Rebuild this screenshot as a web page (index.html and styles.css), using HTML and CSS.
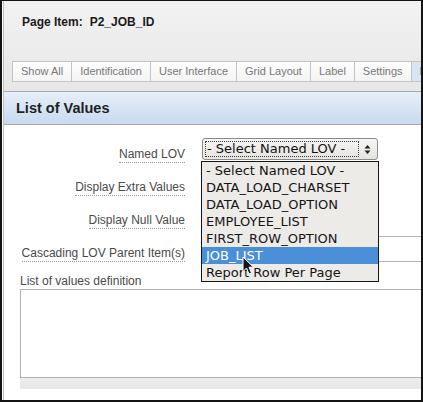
FILE: index.html
```html
<!DOCTYPE html>
<html lang="en">
<head>
<meta charset="utf-8">
<title>Page Item: P2_JOB_ID</title>
<link rel="stylesheet" href="styles.css">
</head>
<body>
<div class="frame">
  <div class="panel">
    <header class="top">
      <h1 class="item-title"><span class="item-key">Page Item:</span><span class="item-name">P2_JOB_ID</span></h1>
      <ul class="tabs">
        <li class="tab">Show All</li>
        <li class="tab">Identification</li>
        <li class="tab">User Interface</li>
        <li class="tab">Grid Layout</li>
        <li class="tab">Label</li>
        <li class="tab">Settings</li>
        <li class="tab tab-active">List of Values</li>
      </ul>
    </header>
    <h2 class="section-head">List of Values</h2>
    <div class="form">
      <div class="row">
        <div class="label-cell"><label class="field-label">Named LOV</label></div>
        <div class="field-cell">
          <div class="select">
            <span class="select-value">- Select Named LOV -</span>
            <span class="select-arrows">
              <svg width="7" height="11" viewBox="0 0 7 11"><polygon points="0.5,4.5 3.5,1 6.5,4.5" fill="#222"/><polygon points="0.5,6.5 3.5,10 6.5,6.5" fill="#222"/></svg>
            </span>
          </div>
          <ul class="dropdown">
            <li class="opt">- Select Named LOV -</li>
            <li class="opt">DATA_LOAD_CHARSET</li>
            <li class="opt">DATA_LOAD_OPTION</li>
            <li class="opt">EMPLOYEE_LIST</li>
            <li class="opt">FIRST_ROW_OPTION</li>
            <li class="opt opt-active">JOB_LIST</li>
            <li class="opt">Report Row Per Page</li>
          </ul>
        </div>
      </div>
      <div class="row">
        <div class="label-cell"><label class="field-label">Display Extra Values</label></div>
        <div class="field-cell"></div>
      </div>
      <div class="row">
        <div class="label-cell"><label class="field-label">Display Null Value</label></div>
        <div class="field-cell"></div>
      </div>
      <div class="row">
        <div class="label-cell"><label class="field-label">Cascading LOV Parent Item(s)</label></div>
        <div class="field-cell"><input class="text-input" type="text"></div>
      </div>
      <div class="def-label">List of values definition</div>
      <textarea class="def-area"></textarea>
      <div class="def-bar"></div>
    </div>
  </div>
  <svg class="cursor" width="13" height="20" viewBox="0 0 13 20"><path d="M1 1 L1 15.5 L4.5 12 L7 18 L9.5 17 L7 11.2 L11.5 11.2 Z" fill="#15151a" stroke="#fff" stroke-width="1" stroke-linejoin="round"/></svg>
</div>
</body>
</html>
```
FILE: styles.css
```css
body {
  margin: 0;
  font-family: "Liberation Sans", Arial, sans-serif;
  background: #fff;
}

.frame {
  position: relative;
  width: 423px;
  height: 402px;
  box-sizing: border-box;
  border-style: solid;
  border-color: #141414;
  border-width: 1px 2px 2px 2px;
  overflow: hidden;
  background: #fff;
}

.panel {
  margin-left: 1px;
  border-left: 1px solid #c2c2c2;
  height: 100%;
  overflow: hidden;
}

.top {
  background: linear-gradient(#f2f2f2, #e7e7e7);
  padding: 14px 0 9px;
  border-bottom: 1px solid #a8a8a8;
}

.item-title {
  margin: 0 0 32px 18px;
  font-size: 12px;
  line-height: 14px;
  font-weight: bold;
  color: #1b1b1b;
}

.item-name {
  margin-left: 7px;
}

.tabs {
  display: flex;
  list-style: none;
  margin: 0 0 0 8px;
  padding: 0;
  white-space: nowrap;
}

.tab {
  flex: none;
  font-size: 11px;
  line-height: 19px;
  padding: 0 8px;
  color: #777;
  background: linear-gradient(#fdfdfd, #f4f4f4);
  border: 1px solid #c4c4c4;
  border-left: none;
}

.tab:first-child {
  border-left: 1px solid #c4c4c4;
}

.tab-active {
  background: #d8e5f3;
}

.section-head {
  margin: 0;
  height: 32px;
  line-height: 32px;
  padding-left: 12px;
  font-size: 14.5px;
  font-weight: bold;
  color: #1f1f1f;
  background: linear-gradient(#e6eff9, #c7daee);
  border-bottom: 1px solid #a9a9a9;
}

.form {
  padding-top: 10px;
}

.row {
  display: grid;
  grid-template-columns: 181px 1fr;
  column-gap: 16px;
  height: 33px;
}

.label-cell {
  text-align: right;
  padding-top: 9px;
}

.field-label {
  display: inline-block;
  font-size: 12px;
  line-height: 14px;
  padding-bottom: 1px;
  border-bottom: 1px dotted #9a9a9a;
  color: #4a4a4a;
}

.field-cell {
  position: relative;
  min-width: 0;
}

.select {
  margin: 3px 0 0 1px;
  width: 176px;
  height: 22px;
  box-sizing: border-box;
  border: 1px solid #8b8b8b;
  border-radius: 3px;
  background: linear-gradient(#f6f5f3, #e6e4e1);
  display: flex;
  padding: 2px;
}

.select-value {
  flex: 0 0 154px;
  box-sizing: border-box;
  border: 1px dotted #3a3a3a;
  font-family: "DejaVu Sans", sans-serif;
  font-size: 13px;
  line-height: 14px;
  padding-left: 1px;
  color: #111;
  white-space: nowrap;
  overflow: hidden;
}

.select-arrows {
  flex: 1;
  display: flex;
  align-items: center;
  justify-content: center;
}

.select-arrows svg {
  display: block;
}

.dropdown {
  position: absolute;
  z-index: 2;
  left: 0;
  top: 26px;
  width: 178px;
  box-sizing: border-box;
  margin: 0;
  padding: 0;
  list-style: none;
  background: #edebe8;
  border: 1px solid #161616;
}

.opt {
  font-family: "DejaVu Sans", sans-serif;
  font-size: 13px;
  line-height: 17px;
  height: 17px;
  padding-left: 4px;
  color: #151515;
  white-space: nowrap;
}

.opt-active {
  background: #4a8fd8;
  color: #fff;
}

.text-input {
  display: block;
  margin: 2px 0 0;
  width: 260px;
  height: 26px;
  box-sizing: border-box;
  border: 1px solid #b5b5b5;
  padding: 0;
  background: #fff;
}

.def-label {
  margin: 7px 0 0 16px;
  font-size: 12px;
  line-height: 14px;
  color: #4a4a4a;
}

.def-area {
  display: block;
  margin: 1px 0 0 16px;
  width: 420px;
  height: 89px;
  box-sizing: border-box;
  border: 1px solid #b2b2b2;
  padding: 0;
  resize: none;
  background: #fff;
}

.def-bar {
  margin-left: 16px;
  height: 11px;
  background: linear-gradient(#ededed, #e7e7e7);
}

.cursor {
  position: absolute;
  z-index: 5;
  left: 240px;
  top: 255px;
}
```
